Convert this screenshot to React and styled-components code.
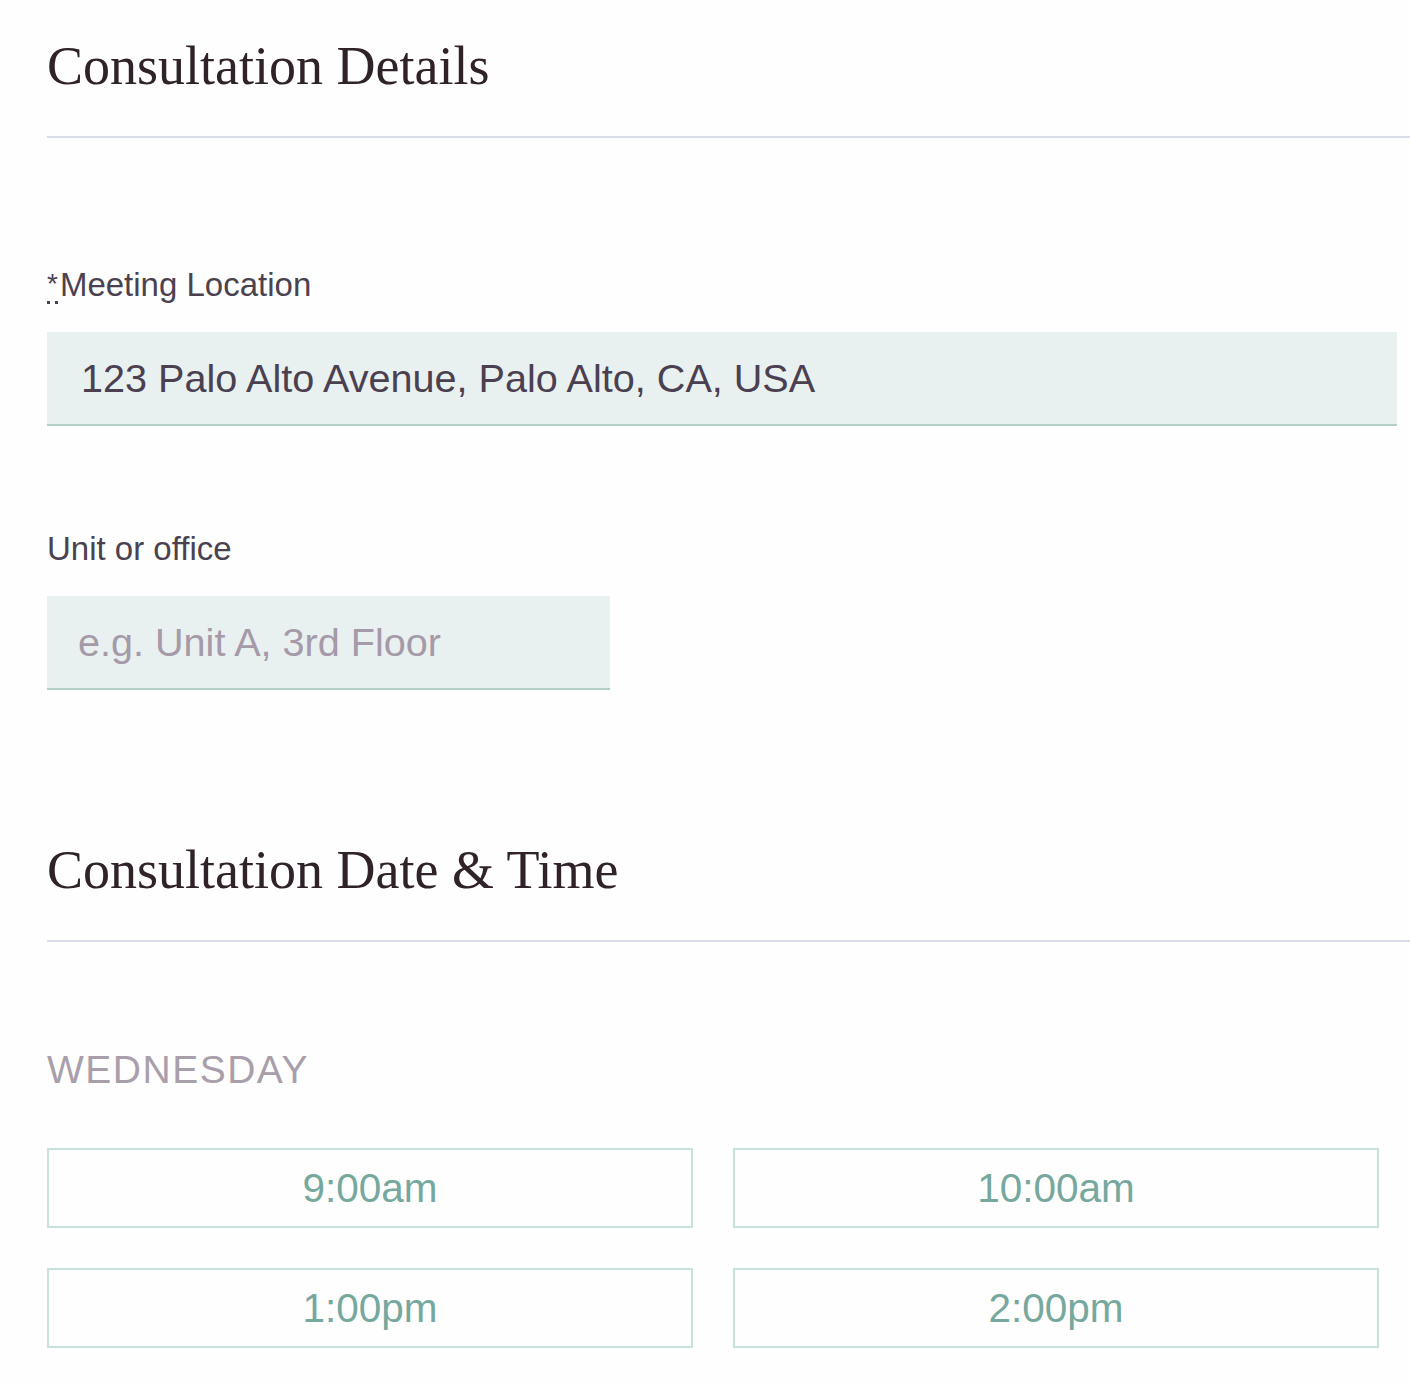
import React from "react";
import styled, { createGlobalStyle } from "styled-components";

const Global = createGlobalStyle`
  body {
    margin: 0;
    background: #fefefe;
    font-family: "Liberation Sans", Arial, sans-serif;
    overflow: hidden;
  }
`;

const Page = styled.div`
  padding: 36px 0 40px 47px;
`;

const Heading = styled.h2`
  margin: 0;
  font-family: "Liberation Serif", "Times New Roman", serif;
  font-weight: 400;
  font-size: 54px;
  line-height: 60px;
  color: #2f2228;
`;

const Divider = styled.hr`
  margin: 40px 0 0;
  border: 0;
  height: 2px;
  background: #d9dce5;
`;

const Field = styled.div`
  margin-top: ${(p) => p.top}px;
`;

const Label = styled.label`
  display: block;
  font-size: 33px;
  line-height: 36px;
  color: #4b4250;
  margin-bottom: 29px;
`;

const Req = styled.abbr`
  text-decoration: none;
  border-bottom: 3px dotted #4b4250;
  font-size: 28px;
  line-height: 1;
  padding-bottom: 2px;
  margin-right: 2px;
  vertical-align: 3px;
`;

const Input = styled.input`
  display: block;
  box-sizing: border-box;
  width: ${(p) => p.w}px;
  height: 94px;
  padding: 0 0 0 ${(p) => p.pad || 34}px;
  border: 0;
  border-bottom: 2px solid #b3cfc7;
  background: #e9f0f0;
  font-family: "Liberation Sans", Arial, sans-serif;
  font-size: 39.6px;
  color: #4a4050;
  outline: none;

  &::placeholder {
    color: #a59aa7;
  }
`;

const Day = styled.div`
  margin-top: 106px;
  font-size: 39px;
  line-height: 44px;
  letter-spacing: 1.5px;
  color: #a99fab;
`;

const Slots = styled.div`
  display: grid;
  grid-template-columns: 646px 646px;
  column-gap: 40px;
  row-gap: 40px;
  margin-top: 56px;
`;

const Slot = styled.button`
  height: 80px;
  box-sizing: border-box;
  border: 2px solid #c9e1de;
  background: #fefefe;
  font-family: "Liberation Sans", Arial, sans-serif;
  font-size: 40.5px;
  color: #76a89e;
  cursor: pointer;
`;

const times = ["9:00am", "10:00am", "1:00pm", "2:00pm"];

export default function App() {
  return (
    <Page>
      <Global />
      <Heading>Consultation Details</Heading>
      <Divider />

      <Field top={129}>
        <Label>
          <Req title="required">*</Req>Meeting Location
        </Label>
        <Input w={1350} defaultValue="123 Palo Alto Avenue, Palo Alto, CA, USA" />
      </Field>

      <Field top={105}>
        <Label>Unit or office</Label>
        <Input w={563} pad={31} placeholder="e.g. Unit A, 3rd Floor" />
      </Field>

      <Field top={150}>
        <Heading>Consultation Date &amp; Time</Heading>
        <Divider />
      </Field>

      <Day>WEDNESDAY</Day>
      <Slots>
        {times.map((t) => (
          <Slot key={t}>{t}</Slot>
        ))}
      </Slots>
    </Page>
  );
}
